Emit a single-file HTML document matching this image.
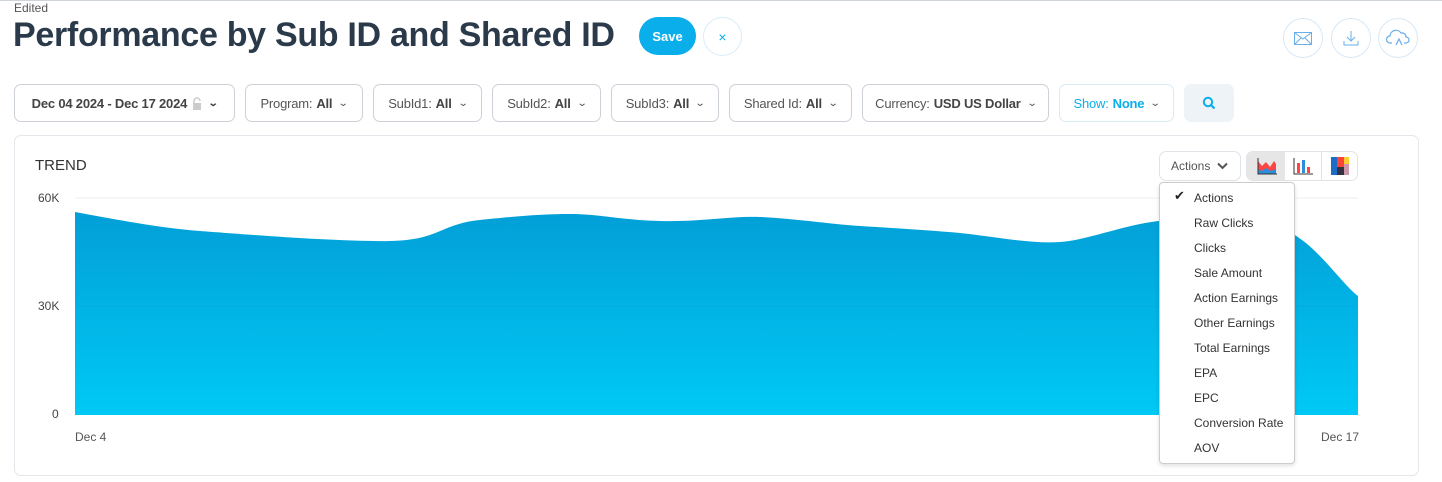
<!DOCTYPE html>
<html><head><style>
*{box-sizing:border-box;margin:0;padding:0}
body{width:1442px;height:482px;background:#fff;font-family:"Liberation Sans",sans-serif;position:relative;overflow:hidden;color:#2c3e50}
.a{position:absolute}
.f{position:absolute;top:84px;height:38px;border:1px solid #ccd1d8;border-radius:7px;font-size:13px;color:#555;display:flex;align-items:center;justify-content:center;white-space:nowrap;letter-spacing:-0.2px}
.f b{color:#444;margin-left:4px}
.f i{font-style:normal;margin-left:7px;font-size:10px;transform:scaleX(1.3)}
.c{position:absolute;top:18px;width:40px;height:40px;border:1px solid #d8e8f6;border-radius:50%;display:flex;align-items:center;justify-content:center}
.m{font-size:12px;color:#333;position:absolute;left:1194px}
</style></head><body>
<div class="a" style="left:0;top:0;width:1442px;height:1px;background:#cfd4da"></div>
<div class="a" style="left:14px;top:1px;font-size:12px;color:#555">Edited</div>
<div class="a" style="left:13px;top:16px;font-size:34px;font-weight:bold;color:#2b3a4a;letter-spacing:-0.3px">Performance by Sub ID and Shared ID</div>
<div class="a" style="left:639px;top:17px;width:57px;height:38px;border-radius:19px;background:#09aeea;color:#fff;font-size:13px;font-weight:bold;display:flex;align-items:center;justify-content:center">Save</div>
<div class="a" style="left:703px;top:17px;width:39px;height:39px;border-radius:50%;border:1px solid #d8ecf8;color:#09aeea;font-size:14px;display:flex;align-items:center;justify-content:center">×</div>
<div class="c" style="left:1283px"><svg width="18" height="13"><rect x=".5" y=".5" width="17" height="12" fill="none" stroke="#6aaee6"/><path d="M.5 .5 9 7 17.5 .5M.5 12.5 7 6M17.5 12.5 11 6" fill="none" stroke="#6aaee6"/></svg></div>
<div class="c" style="left:1331px"><svg width="16" height="16"><path d="M8 1v10M4 7l4 4 4-4M1 11v4h14v-4" fill="none" stroke="#6aaee6"/></svg></div>
<div class="c" style="left:1378px"><svg width="24" height="18"><path d="M6 14H4a3.5 3.5 0 0 1 0-7 6 6 0 0 1 11-3 4 4 0 0 1 5 4 3 3 0 0 1 0 6h-2M10 16l3-6 3 6" fill="none" stroke="#6aaee6" stroke-width="1.2"/></svg></div>

<div class="f" style="left:14px;width:221px;font-weight:bold;color:#444">Dec 04 2024 - Dec 17 2024 <svg style="margin-left:5px" width="10" height="13"><path d="M2 6V4a3 3 0 0 1 6 0" fill="none" stroke="#ccc" stroke-width="1.5"/><rect x="1" y="6" width="8" height="7" fill="#ccc"/></svg><i>⌄</i></div>
<div class="f" style="left:245px;width:118px">Program:<b>All</b><i>⌄</i></div>
<div class="f" style="left:373px;width:109px">SubId1:<b>All</b><i>⌄</i></div>
<div class="f" style="left:492px;width:109px">SubId2:<b>All</b><i>⌄</i></div>
<div class="f" style="left:611px;width:108px">SubId3:<b>All</b><i>⌄</i></div>
<div class="f" style="left:729px;width:123px">Shared Id:<b>All</b><i>⌄</i></div>
<div class="f" style="left:862px;width:187px">Currency:<b>USD US Dollar</b><i>⌄</i></div>
<div class="f" style="left:1059px;width:115px;border-color:#d8ecf8;color:#09aeea">Show:<b style="color:#09aeea">None</b><i style="color:#555">⌄</i></div>
<div class="a" style="left:1184px;top:84px;width:50px;height:38px;border-radius:7px;background:#eef3f8;display:flex;align-items:center;justify-content:center"><svg width="14" height="14"><circle cx="6" cy="6" r="4.2" fill="none" stroke="#09aeea" stroke-width="2"/><path d="M9 9l3.5 3.5" stroke="#09aeea" stroke-width="2.2"/></svg></div>

<div class="a" style="left:14px;top:135px;width:1405px;height:341px;border:1px solid #e3e6ea;border-radius:7px"></div>
<div class="a" style="left:35px;top:157px;font-size:15px;color:#333">TREND</div>
<div class="a" style="left:38px;top:191px;font-size:12px;color:#444">60K</div>
<div class="a" style="left:38px;top:299px;font-size:12px;color:#444">30K</div>
<div class="a" style="left:52px;top:407px;font-size:12px;color:#444">0</div>
<div class="a" style="left:75px;top:430px;font-size:12px;color:#555">Dec 4</div>
<div class="a" style="left:1321px;top:430px;font-size:12px;color:#555">Dec 17</div>
<svg class="a" style="left:0;top:0" width="1442" height="482">
<defs><linearGradient id="g" x1="0" y1="0" x2="0" y2="1"><stop offset="0" stop-color="#029fd7"/><stop offset="1" stop-color="#00c9f6"/></linearGradient></defs>
<line x1="75" y1="198" x2="1358" y2="198" stroke="#eee"/>
<path d="M75 212C130 222 160 228 200 231S340 242 390 241S440 224 480 220S540 214 570 214S620 220 660 221S730 216 760 217S830 224 860 226S930 230 960 233S1030 244 1060 242S1130 222 1170 220S1260 215 1290 232S1340 282 1358 296V415H75Z" fill="url(#g)"/>
<line x1="75" y1="306" x2="1358" y2="306" stroke="#0a9ed3" stroke-opacity=".35"/>
</svg>

<div class="a" style="left:1159px;top:151px;width:82px;height:30px;border:1px solid #e0e3e7;border-radius:7px;font-size:12px;color:#555;display:flex;align-items:center;padding-left:11px">Actions <svg style="margin-left:7px" width="11" height="8"><path d="M1 1.5l4.5 4.5 4.5-4.5" fill="none" stroke="#555" stroke-width="2"/></svg></div>
<div class="a" style="left:1246px;top:151px;width:112px;height:30px;border:1px solid #e0e3e7;border-radius:7px;overflow:hidden">
<div class="a" style="left:0;top:0;width:38px;height:30px;background:#e6e6e6"></div>
<div class="a" style="left:74px;top:0;width:1px;height:30px;background:#e0e3e7"></div>
<svg class="a" style="left:10px;top:5px" width="20" height="18"><path d="M1 17V4l4 5 4-4 4 5 4-6 2 3V17Z" fill="#f44"/><path d="M1 17v-5l4 2 4-3 5 3 5-2v5Z" fill="#2a8fd8"/><path d="M1 1v16h19" fill="none" stroke="#333"/></svg>
<svg class="a" style="left:46px;top:5px" width="20" height="18"><path d="M1 1v16h19" fill="none" stroke="#333"/><rect x="4" y="6" width="3" height="10" fill="#f44"/><rect x="9" y="3" width="3" height="13" fill="#2a8fd8"/><rect x="14" y="10" width="3" height="6" fill="#f44"/></svg>
<svg class="a" style="left:84px;top:5px" width="19" height="18"><rect x="0" y="0" width="6" height="18" fill="#1c6cc8"/><rect x="6" y="0" width="7" height="10" fill="#f43"/><rect x="13" y="0" width="5" height="7" fill="#fc3"/><rect x="6" y="10" width="7" height="8" fill="#334"/><rect x="13" y="7" width="5" height="11" fill="#c9a"/></svg>
</div>

<div class="a" style="left:1159px;top:182px;width:136px;height:282px;background:#fff;border:1px solid #ccc;border-radius:4px;box-shadow:0 2px 4px rgba(0,0,0,.12)"></div>
<div class="a" style="left:1174px;top:188px;font-size:13px;color:#222">✔</div>
<div class="m" style="top:191px">Actions</div>
<div class="m" style="top:216px">Raw Clicks</div>
<div class="m" style="top:241px">Clicks</div>
<div class="m" style="top:266px">Sale Amount</div>
<div class="m" style="top:291px">Action Earnings</div>
<div class="m" style="top:316px">Other Earnings</div>
<div class="m" style="top:341px">Total Earnings</div>
<div class="m" style="top:366px">EPA</div>
<div class="m" style="top:391px">EPC</div>
<div class="m" style="top:416px">Conversion Rate</div>
<div class="m" style="top:441px">AOV</div>
</body></html>
